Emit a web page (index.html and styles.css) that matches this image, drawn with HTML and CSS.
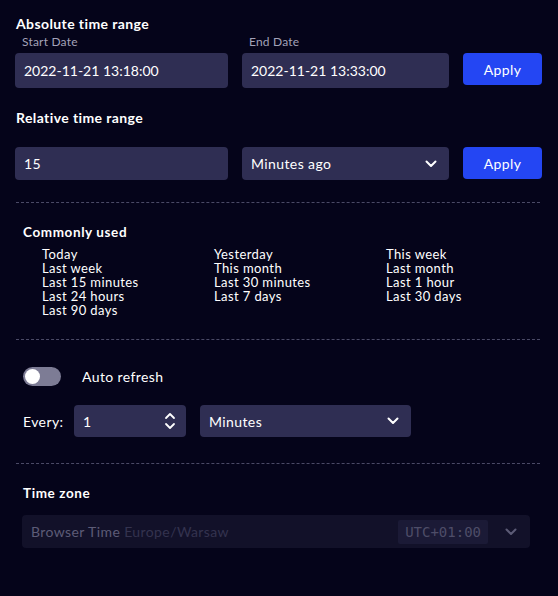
FILE: index.html
```html
<!DOCTYPE html>
<html>
<head>
<meta charset="utf-8">
<link rel="stylesheet" href="styles.css">
</head>
<body>
<div class="panel">
  <section class="block">
    <h3 class="title">Absolute time range</h3>
    <div class="row">
      <div class="field">
        <label class="label">Start Date</label>
        <div class="input tall">2022-11-21 13:18:00</div>
      </div>
      <div class="field field-end">
        <label class="label">End Date</label>
        <div class="input tall">2022-11-21 13:33:00</div>
      </div>
      <button class="btn">Apply</button>
    </div>
    <h3 class="title title-rel">Relative time range</h3>
    <div class="row row-rel">
      <div class="input w1">15</div>
      <div class="input select w2"><span>Minutes ago</span>
        <svg class="chev" width="12" height="8" viewBox="0 0 12 8"><path d="M1.5 1.5 L6 6 L10.5 1.5" fill="none" stroke="#fff" stroke-width="2" stroke-linecap="round" stroke-linejoin="round"/></svg>
      </div>
      <button class="btn">Apply</button>
    </div>
  </section>

  <section class="block divided common">
    <h3 class="title sm">Commonly used</h3>
    <div class="quick">
      <ul class="col">
        <li>Today</li><li>Last week</li><li>Last 15 minutes</li><li>Last 24 hours</li><li>Last 90 days</li>
      </ul>
      <ul class="col">
        <li>Yesterday</li><li>This month</li><li>Last 30 minutes</li><li>Last 7 days</li>
      </ul>
      <ul class="col">
        <li>This week</li><li>Last month</li><li>Last 1 hour</li><li>Last 30 days</li>
      </ul>
    </div>
  </section>

  <section class="block divided refresh">
    <div class="toggle-row">
      <span class="toggle"><span class="knob"></span></span>
      <span class="toggle-label">Auto refresh</span>
    </div>
    <div class="every-row">
      <span class="every">Every:</span>
      <div class="input num"><span>1</span>
        <svg class="spin" width="12" height="18" viewBox="0 0 12 18"><path d="M2 6 L6 2 L10 6 M2 12 L6 16 L10 12" fill="none" stroke="#fff" stroke-width="1.8" stroke-linecap="round" stroke-linejoin="round"/></svg>
      </div>
      <div class="input select unit"><span>Minutes</span>
        <svg class="chev" width="12" height="8" viewBox="0 0 12 8"><path d="M1.5 1.5 L6 6 L10.5 1.5" fill="none" stroke="#fff" stroke-width="2" stroke-linecap="round" stroke-linejoin="round"/></svg>
      </div>
    </div>
  </section>

  <section class="block divided tz">
    <h3 class="title sm">Time zone</h3>
    <div class="tz-select">
      <span class="tz-name">Browser Time <span class="tz-region">Europe/Warsaw</span></span>
      <span class="tz-offset">UTC+01:00</span>
      <svg class="tz-chev" width="12" height="8" viewBox="0 0 12 8"><path d="M1.5 1.5 L6 6 L10.5 1.5" fill="none" stroke="#5c5b76" stroke-width="2" stroke-linecap="round" stroke-linejoin="round"/></svg>
    </div>
  </section>
</div>
</body>
</html>
```

FILE: styles.css
```css
* { box-sizing: border-box; }
html, body {
  margin: 0;
  background: #05041a;
  color: #ffffff;
  font-family: Lato, "Noto Sans", sans-serif;
  letter-spacing: 0.4px;
  height: 100%;
}
.panel {
  padding: 14px 0 0 16px;
}
.title {
  margin: 0;
  font-size: 14px;
  font-weight: 700;
  line-height: 20px;
}
.title.sm { font-size: 13.5px; letter-spacing: 0.6px; }
.title-rel { margin-top: 20px; }
.row {
  display: flex;
  align-items: flex-end;
}
.field { display: flex; flex-direction: column; flex-shrink: 0; }
.label {
  font-size: 12px;
  line-height: 16px;
  color: #a3a2b8;
  padding-left: 7px;
  margin-bottom: 3px;
  letter-spacing: 0.2px;
}
.field:first-child { margin-left: -1px; width: 213px; }
.field-end { margin-left: 14px; width: 207px; }
.input {
  background: #2f2e53;
  border-radius: 4px;
  font-size: 14px;
  color: #ffffff;
  display: flex;
  align-items: center;
  padding: 0 9px;
  height: 33px;
  flex-shrink: 0;
}
.input.tall { height: 35px; letter-spacing: 0; }
.btn {
  margin-left: 14px;
  width: 79px;
  height: 32px;
  background: #2446f3;
  border: 0;
  border-radius: 4px;
  color: #ffffff;
  font-family: inherit;
  font-size: 14px;
  letter-spacing: 0.4px;
  padding: 0;
  flex-shrink: 0;
}
.row > .btn { margin-bottom: 3px; align-self: flex-end; }
.row-rel { margin-top: 19px; align-items: flex-start; }
.row-rel .btn { align-self: flex-start; margin-bottom: 0; }
.w1 { width: 213px; margin-left: -1px; }
.w2 { width: 207px; margin-left: 14px; }
.select { justify-content: space-between; padding-right: 12px; }
.divided {
  border-top: 1px dashed #4b4a66;
  margin-right: 18px;
}
.common { margin-top: 22px; padding: 19px 0 0 7px; }
.quick {
  display: grid;
  grid-template-columns: 172px 172px 172px;
  margin-top: 5px;
  padding-left: 19px;
}
.col {
  list-style: none;
  margin: 0;
  padding: 0;
  font-size: 13px;
  line-height: 14px;
}
.refresh {
  margin-top: 22px;
  padding: 27px 0 0 7px;
}
.toggle-row { display: flex; align-items: center; height: 19px; }
.toggle {
  width: 38px;
  height: 19px;
  border-radius: 10px;
  background: #7d7c95;
  position: relative;
  display: inline-block;
}
.knob {
  position: absolute;
  left: 2px;
  top: 2px;
  width: 15px;
  height: 15px;
  border-radius: 50%;
  background: #ffffff;
}
.toggle-label {
  margin-left: 21px;
  font-size: 14px;
}
.every-row {
  display: flex;
  align-items: center;
  margin-top: 19px;
}
.every { font-size: 14px; width: 51px; }
.num { width: 112px; height: 32px; justify-content: space-between; padding-right: 10px; }
.unit { width: 211px; height: 32px; margin-left: 14px; }
.tz {
  margin-top: 26px;
  padding: 19px 0 0 7px;
}
.tz-select {
  margin-top: 12px;
  margin-left: -1px;
  width: 508px;
  height: 33px;
  background: #121129;
  border-radius: 4px;
  display: flex;
  align-items: center;
  padding: 0 9px;
  font-size: 14px;
}
.tz-name { color: #5d5c77; flex: 1; }
.tz-region { color: #34334f; }
.tz-offset {
  font-family: "DejaVu Sans Mono", monospace;
  font-size: 14px;
  letter-spacing: 0;
  color: #4e4d68;
  background: #1b1a36;
  padding: 0 7px;
  height: 24px;
  line-height: 24px;
  border-radius: 2px;
}
.tz-chev { margin-left: 17px; margin-right: 4px; }
```
